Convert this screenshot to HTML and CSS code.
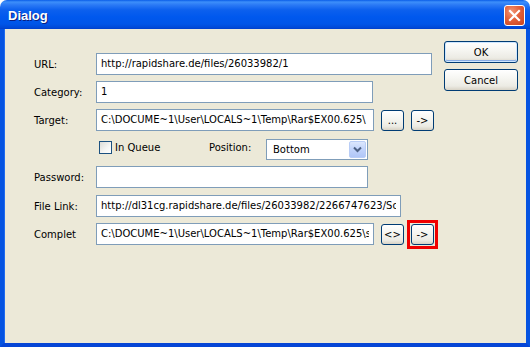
FILE: index.html
```html
<!DOCTYPE html>
<html>
<head>
<meta charset="utf-8">
<link rel="stylesheet" href="styles.css">
</head>
<body>
<div class="window">
  <div class="titlebar">
    <span class="title">Dialog</span>
    <div class="close">
      <svg width="13" height="13" viewBox="0 0 13 13"><path d="M2 2 L11 11 M11 2 L2 11" stroke="#fff" stroke-width="2.2" stroke-linecap="square"/></svg>
    </div>
  </div>
  <div class="client">
    <div class="form">
      <div class="row">
        <span class="label">URL:</span>
        <div class="field w-url">http://rapidshare.de/files/26033982/1</div>
      </div>
      <div class="row">
        <span class="label">Category:</span>
        <div class="field w-cat">1</div>
      </div>
      <div class="row">
        <span class="label">Target:</span>
        <div class="field w-target">C:\DOCUME~1\User\LOCALS~1\Temp\Rar$EX00.625\</div>
        <div class="btn small">...</div>
        <div class="btn small">-&gt;</div>
      </div>
      <div class="row queue">
        <span class="label"></span>
        <div class="check-wrap"><span class="checkbox"></span><span>In Queue</span></div>
        <span class="pos-label">Position:</span>
        <div class="select">
          <span class="select-text">Bottom</span>
          <span class="drop">
            <svg width="9" height="7" viewBox="0 0 9 7"><path d="M1 1.5 L4.5 5 L8 1.5" stroke="#4D6185" stroke-width="2" fill="none"/></svg>
          </span>
        </div>
      </div>
      <div class="row">
        <span class="label">Password:</span>
        <div class="field w-pass"></div>
      </div>
      <div class="row link-row">
        <span class="label">File Link:</span>
        <div class="field w-link"><span class="clip">http://dl31cg.rapidshare.de/files/26033982/2266747623/Soth</span></div>
      </div>
      <div class="row">
        <span class="label">Complet</span>
        <div class="field w-target"><span class="clip">C:\DOCUME~1\User\LOCALS~1\Temp\Rar$EX00.625\sc</span></div>
        <div class="btn small">&lt;&gt;</div>
        <div class="mark"><div class="btn small inner">-&gt;</div></div>
      </div>
    </div>
    <div class="side">
      <div class="btn big default">OK</div>
      <div class="btn big">Cancel</div>
    </div>
  </div>
</div>
</body>
</html>
```

FILE: styles.css
```css
html, body {
  margin: 0;
  padding: 0;
  background: #ffffff;
}

.window {
  width: 530px;
  height: 347px;
  display: flex;
  flex-direction: column;
  font-family: "DejaVu Sans", Verdana, sans-serif;
  font-size: 10px;
  color: #000;
}

.titlebar {
  height: 29px;
  flex: none;
  border-radius: 7px 7px 0 0;
  background: linear-gradient(to bottom, #0A5DE8 0px, #3D8FFA 2px, #2A79F5 5px, #0C60EE 10px, #0058EE 17px, #0055E8 24px, #0047D6 28px, #003DC8 29px);
  display: flex;
  align-items: center;
  padding: 0 5px 0 8px;
  box-sizing: border-box;
}

.title {
  flex: 1;
  font-family: "Liberation Sans", Arial, sans-serif;
  font-weight: bold;
  font-size: 13px;
  color: #fff;
  text-shadow: 1px 1px 0 #0A1E80;
  margin-top: 1px;
}

.close {
  width: 19px;
  height: 19px;
  border: 1px solid #fff;
  border-radius: 3px;
  background: radial-gradient(circle at 35% 30%, #F29676 0%, #E2603B 45%, #C9431D 100%);
  display: flex;
  align-items: center;
  justify-content: center;
  margin-top: 1px;
}

.client {
  flex: 1;
  display: flex;
  background: #ECE9D8;
  border-left: 4px solid #0553E1;
  border-right: 4px solid #0553E1;
  border-bottom: 4px solid #0545D6;
  box-shadow: inset 1px 0 0 #1F6BF0;
}

.form {
  padding: 24px 0 0 30px;
  display: flex;
  flex-direction: column;
  gap: 6px;
}

.row {
  display: flex;
  align-items: center;
  height: 22px;
}

.row.queue {
  height: 23px;
}

.row.link-row {
  margin-top: 1px;
}

.label {
  width: 62px;
  flex: none;
  white-space: nowrap;
}

.field {
  height: 22px;
  box-sizing: border-box;
  border: 1px solid #7F9DB9;
  background: #fff;
  padding: 0 4px;
  line-height: 20px;
  white-space: nowrap;
  overflow: hidden;
}

.clip {
  display: block;
  overflow: hidden;
}

.w-url { width: 336px; }
.w-cat { width: 277px; }
.w-target { width: 278px; }
.w-pass { width: 272px; }
.w-link { width: 305px; }

.btn {
  box-sizing: border-box;
  border: 1px solid #003C74;
  border-radius: 3px;
  background: linear-gradient(to bottom, #FFFFFF 0%, #F6F6F2 40%, #ECEBE4 80%, #D8D3C6 100%);
  display: flex;
  align-items: center;
  justify-content: center;
  white-space: nowrap;
}

.btn.small {
  width: 23px;
  height: 21px;
  margin-left: 7px;
  flex: none;
}

.mark {
  border: 3px solid #F00000;
  padding: 1px;
  margin-left: 3px;
  flex: none;
}

.btn.small.inner {
  margin-left: 0;
}

.check-wrap {
  width: 113px;
  flex: none;
  display: flex;
  align-items: center;
  gap: 3px;
  padding-left: 3px;
  box-sizing: border-box;
  margin-top: -2px;
}

.checkbox {
  width: 13px;
  height: 13px;
  box-sizing: border-box;
  border: 1px solid #1C5180;
  background: linear-gradient(135deg, #DCDCD7 0%, #F6F6F4 60%, #FFFFFF 100%);
}

.pos-label {
  width: 57px;
  flex: none;
  margin-top: -2px;
}

.select {
  width: 102px;
  height: 21px;
  box-sizing: border-box;
  border: 1px solid #7F9DB9;
  background: #fff;
  display: flex;
  align-items: center;
  padding: 1px;
  margin-top: 1px;
}

.select-text {
  flex: 1;
  padding-left: 5px;
}

.drop {
  width: 17px;
  height: 17px;
  box-sizing: border-box;
  border: 1px solid #B9CDF6;
  border-radius: 2px;
  background: linear-gradient(to bottom, #DCE7FD 0%, #C1D3FB 50%, #B0C6F7 100%);
  display: flex;
  align-items: center;
  justify-content: center;
}

.side {
  margin-left: auto;
  padding: 12px 8px 0 0;
  display: flex;
  flex-direction: column;
  gap: 6px;
}

.btn.big {
  width: 74px;
  height: 22px;
}

.btn.default {
  box-shadow: inset 0 0 0 1px #CEE7FF, inset 0 -1px 0 1px #89ADE4;
}
```
